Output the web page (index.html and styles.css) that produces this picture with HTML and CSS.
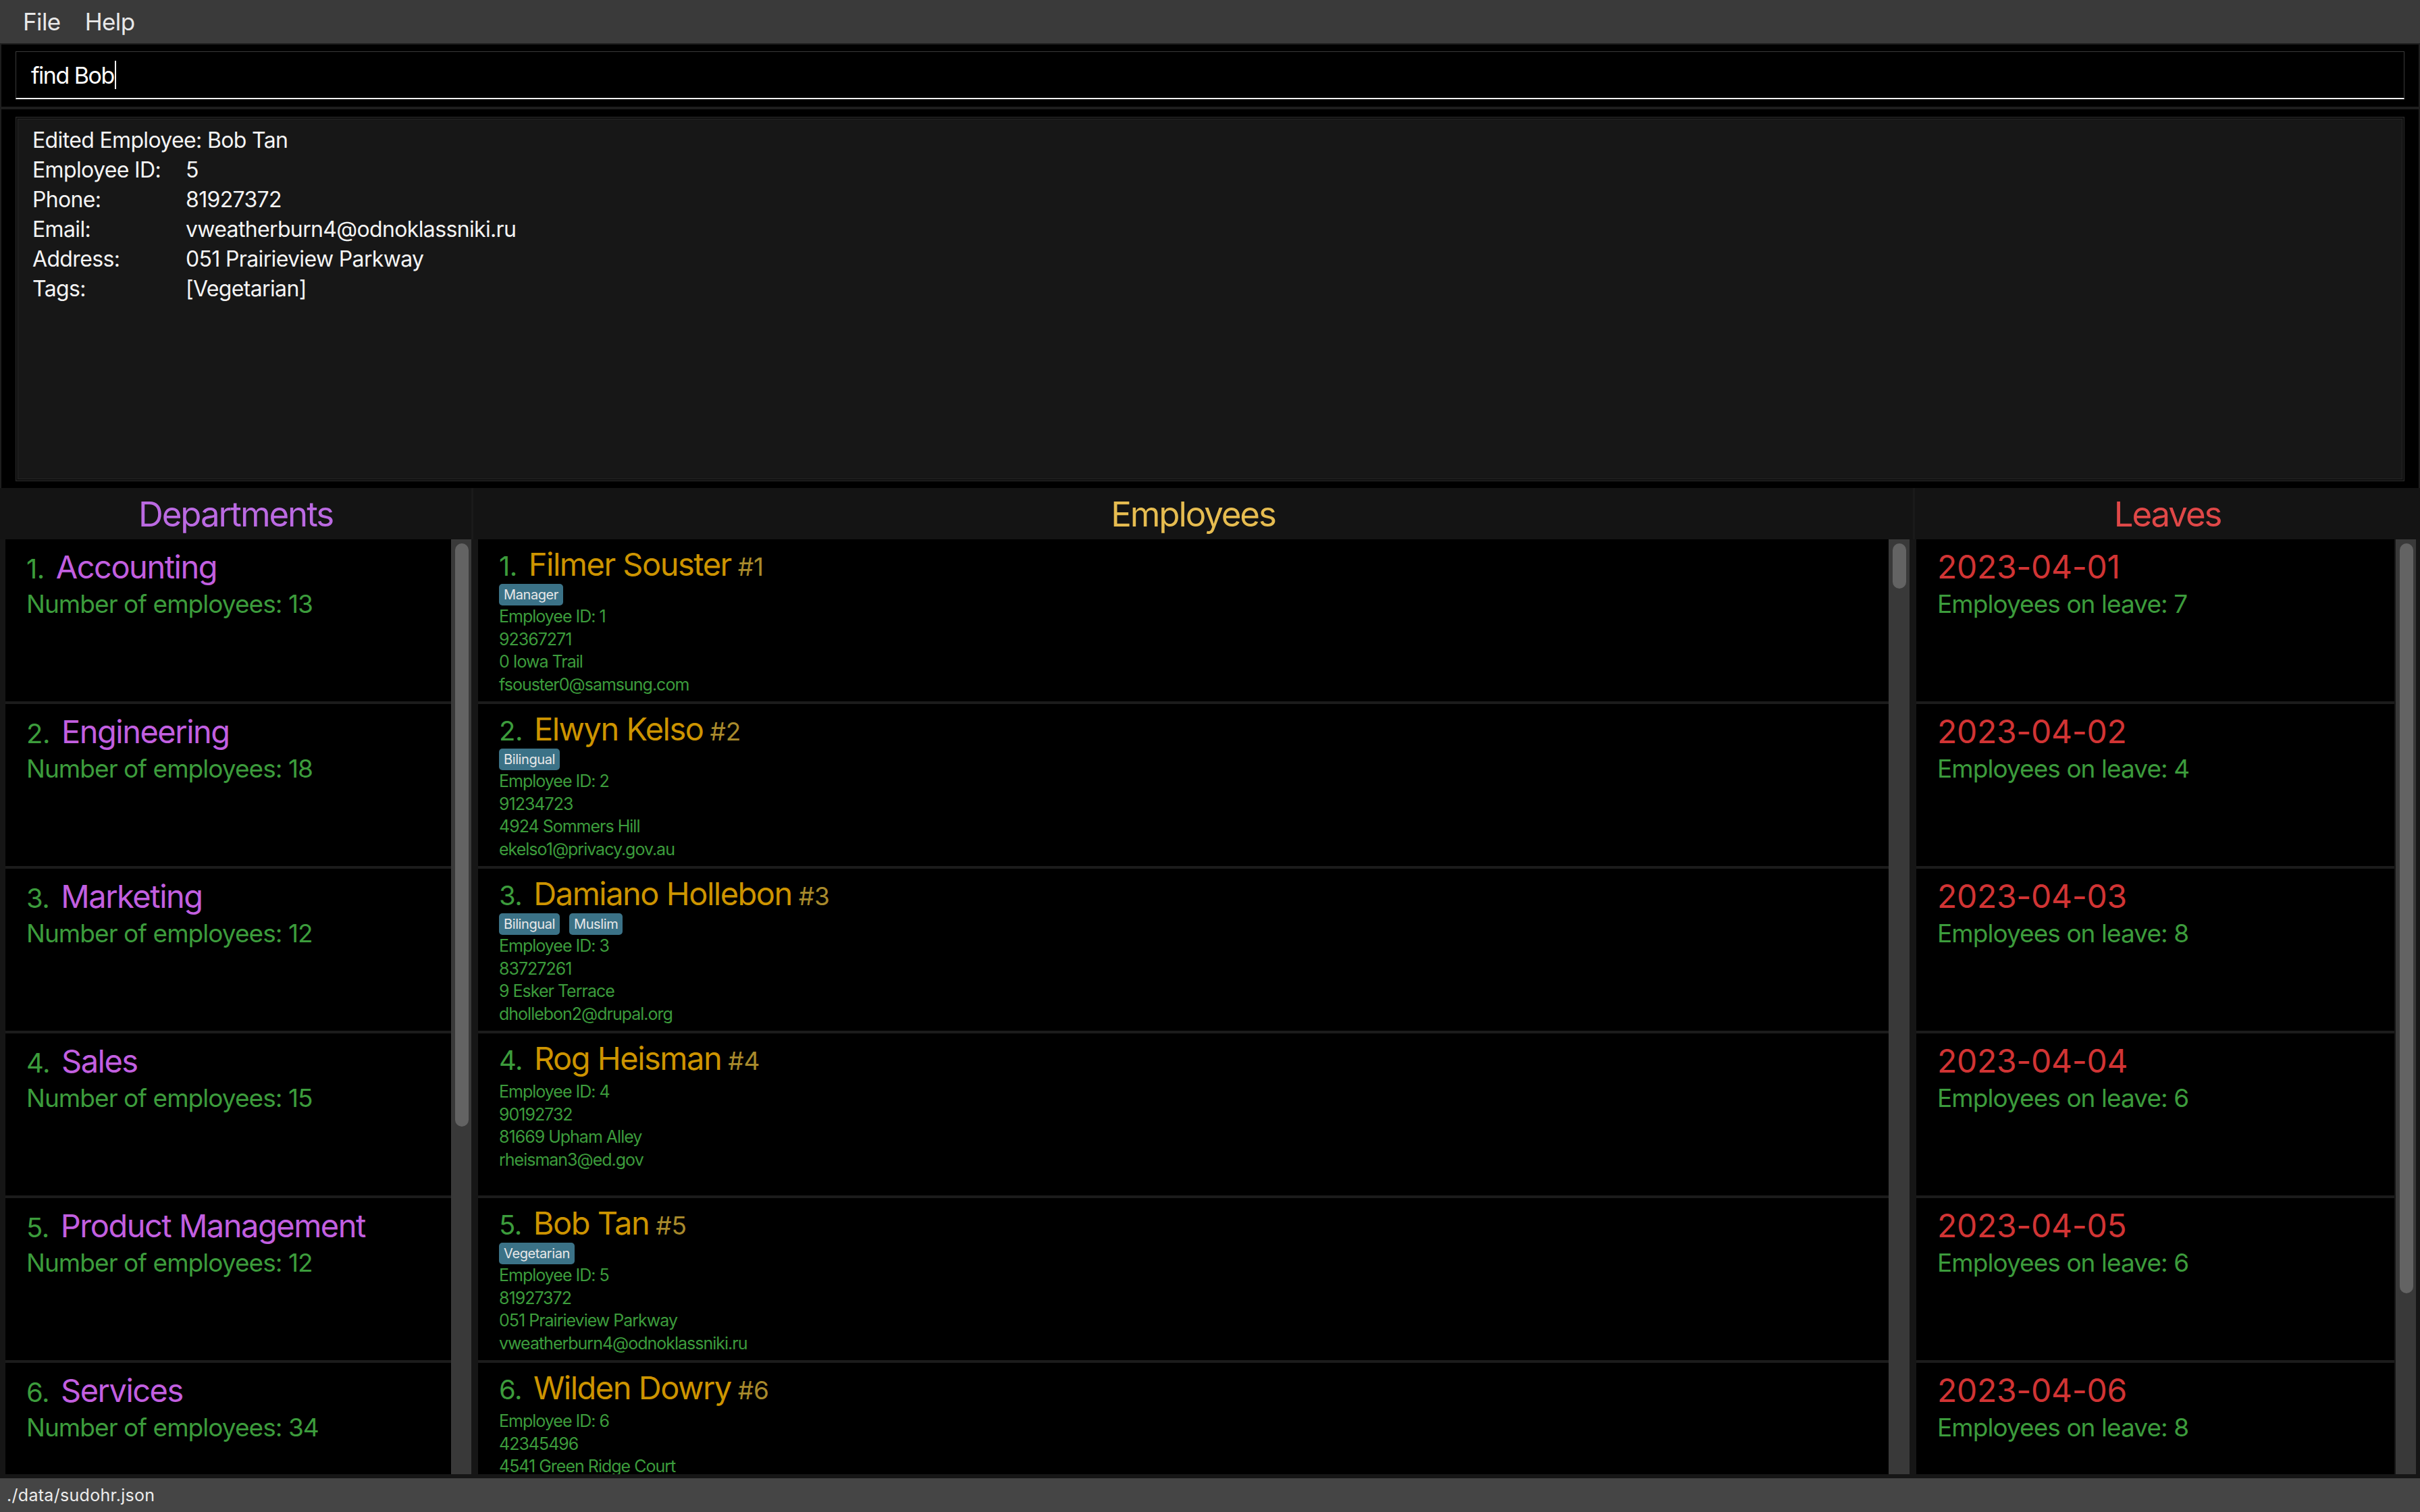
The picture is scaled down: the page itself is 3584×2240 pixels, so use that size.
FILE: index.html
```html
<!DOCTYPE html>
<html lang="en">
<head>
<meta charset="utf-8">
<title>SudoHR</title>
<link rel="stylesheet" href="styles.css">
</head>
<body>
<div class="app">
  <div class="menubar">
    <span class="menu-item">File</span>
    <span class="menu-item">Help</span>
  </div>

  <div class="command-pane">
    <div class="command-input"><span class="command-text">find Bob</span><span class="caret"></span></div>
  </div>

  <div class="result-pane">
    <div class="result-box">
      <div class="result-line">Edited Employee: Bob Tan</div>
      <div class="result-grid">
        <span>Employee ID:</span><span>5</span>
        <span>Phone:</span><span>81927372</span>
        <span>Email:</span><span>vweatherburn4@odnoklassniki.ru</span>
        <span>Address:</span><span>051 Prairieview Parkway</span>
        <span>Tags:</span><span>[Vegetarian]</span>
      </div>
    </div>
  </div>

  <div class="columns">
    <section class="column col-dept">
      <div class="col-header dept-header">Departments</div>
      <div class="list-wrap">
        <div class="list">
          <div class="cell"><div class="title-row"><span class="idx">1.</span><span class="dept-name">Accounting</span></div><div class="sub">Number of employees: 13</div></div>
          <div class="cell"><div class="title-row"><span class="idx">2.</span><span class="dept-name">Engineering</span></div><div class="sub">Number of employees: 18</div></div>
          <div class="cell"><div class="title-row"><span class="idx">3.</span><span class="dept-name">Marketing</span></div><div class="sub">Number of employees: 12</div></div>
          <div class="cell"><div class="title-row"><span class="idx">4.</span><span class="dept-name">Sales</span></div><div class="sub">Number of employees: 15</div></div>
          <div class="cell"><div class="title-row"><span class="idx">5.</span><span class="dept-name">Product Management</span></div><div class="sub">Number of employees: 12</div></div>
          <div class="cell"><div class="title-row"><span class="idx">6.</span><span class="dept-name">Services</span></div><div class="sub">Number of employees: 34</div></div>
        </div>
        <div class="scrollbar"><div class="thumb thumb-dept"></div></div>
      </div>
    </section>

    <section class="column col-emp">
      <div class="col-header emp-header">Employees</div>
      <div class="list-wrap">
        <div class="list">
          <div class="cell emp-cell">
            <div class="title-row"><span class="idx">1.</span><span class="emp-name">Filmer Souster</span><span class="emp-id">#1</span></div>
            <div class="tags"><span class="tag">Manager</span></div>
            <div class="details"><div>Employee ID: 1</div><div>92367271</div><div>0 Iowa Trail</div><div>fsouster0@samsung.com</div></div>
          </div>
          <div class="cell emp-cell">
            <div class="title-row"><span class="idx">2.</span><span class="emp-name">Elwyn Kelso</span><span class="emp-id">#2</span></div>
            <div class="tags"><span class="tag">Bilingual</span></div>
            <div class="details"><div>Employee ID: 2</div><div>91234723</div><div>4924 Sommers Hill</div><div>ekelso1@privacy.gov.au</div></div>
          </div>
          <div class="cell emp-cell">
            <div class="title-row"><span class="idx">3.</span><span class="emp-name">Damiano Hollebon</span><span class="emp-id">#3</span></div>
            <div class="tags"><span class="tag">Bilingual</span><span class="tag">Muslim</span></div>
            <div class="details"><div>Employee ID: 3</div><div>83727261</div><div>9 Esker Terrace</div><div>dhollebon2@drupal.org</div></div>
          </div>
          <div class="cell emp-cell">
            <div class="title-row"><span class="idx">4.</span><span class="emp-name">Rog Heisman</span><span class="emp-id">#4</span></div>
            <div class="tags"></div>
            <div class="details"><div>Employee ID: 4</div><div>90192732</div><div>81669 Upham Alley</div><div>rheisman3@ed.gov</div></div>
          </div>
          <div class="cell emp-cell">
            <div class="title-row"><span class="idx">5.</span><span class="emp-name">Bob Tan</span><span class="emp-id">#5</span></div>
            <div class="tags"><span class="tag">Vegetarian</span></div>
            <div class="details"><div>Employee ID: 5</div><div>81927372</div><div>051 Prairieview Parkway</div><div>vweatherburn4@odnoklassniki.ru</div></div>
          </div>
          <div class="cell emp-cell">
            <div class="title-row"><span class="idx">6.</span><span class="emp-name">Wilden Dowry</span><span class="emp-id">#6</span></div>
            <div class="tags"></div>
            <div class="details"><div>Employee ID: 6</div><div>42345496</div><div>4541 Green Ridge Court</div></div>
          </div>
        </div>
        <div class="scrollbar"><div class="thumb thumb-emp"></div></div>
      </div>
    </section>

    <section class="column col-leave">
      <div class="col-header leave-header">Leaves</div>
      <div class="list-wrap">
        <div class="list">
          <div class="cell leave-cell"><div class="title-row"><span class="leave-date">2023-04-01</span></div><div class="sub">Employees on leave: 7</div></div>
          <div class="cell leave-cell"><div class="title-row"><span class="leave-date">2023-04-02</span></div><div class="sub">Employees on leave: 4</div></div>
          <div class="cell leave-cell"><div class="title-row"><span class="leave-date">2023-04-03</span></div><div class="sub">Employees on leave: 8</div></div>
          <div class="cell leave-cell"><div class="title-row"><span class="leave-date">2023-04-04</span></div><div class="sub">Employees on leave: 6</div></div>
          <div class="cell leave-cell"><div class="title-row"><span class="leave-date">2023-04-05</span></div><div class="sub">Employees on leave: 6</div></div>
          <div class="cell leave-cell"><div class="title-row"><span class="leave-date">2023-04-06</span></div><div class="sub">Employees on leave: 8</div></div>
        </div>
        <div class="scrollbar"><div class="thumb thumb-leave"></div></div>
      </div>
    </section>
  </div>

  <div class="statusbar">./data/sudohr.json</div>
</div>
</body>
</html>
```

FILE: styles.css
```css
* {
  box-sizing: border-box;
  margin: 0;
  padding: 0;
}

html, body {
  width: 3584px;
  height: 2240px;
  overflow: hidden;
  background: #000;
}

body {
  font-family: Inter, "Noto Sans", sans-serif;
  color: #fff;
}

.app {
  display: flex;
  flex-direction: column;
  height: 2240px;
}

/* Menu bar */
.menubar {
  flex: none;
  height: 64px;
  background: #3a3a3a;
  display: flex;
  align-items: center;
  padding-left: 16px;
  font-size: 35px;
  letter-spacing: -0.6px;
  color: #e8e8e8;
}

.menu-item {
  padding: 0 18px;
}

/* Command box */
.command-pane {
  flex: none;
  height: 96px;
  border: 2px solid #1e1e1e;
  padding: 10px 21px 11px;
  background: #000;
}

.command-input {
  height: 71px;
  border: 1px solid #3a3a3a;
  border-bottom: 2px solid #f2f2f2;
  background: #000;
  display: flex;
  align-items: center;
  padding-left: 22px;
  font-size: 34px;
  letter-spacing: -1.5px;
  color: #fff;
}

.caret {
  display: inline-block;
  width: 2px;
  height: 42px;
  background: #fff;
  margin-left: 1px;
}

/* Result display */
.result-pane {
  flex: none;
  height: 563px;
  border: 2px solid #1e1e1e;
  border-bottom: none;
  padding: 11px 21px 10px;
  background: #000;
}

.result-box {
  height: 540px;
  border: 1px solid #2c2c2c;
  box-shadow: inset 0 0 0 2px #0e0e0e, inset 0 0 0 3px #262626;
  background: #171717;
  padding: 12px 24px;
  font-size: 32px;
  line-height: 44px;
  letter-spacing: -0.65px;
  color: #f4f4f4;
}

.result-grid {
  display: grid;
  grid-template-columns: 227px auto;
}

/* Columns */
.columns {
  flex: 1;
  display: grid;
  grid-template-columns: 698px 2135px 751px;
  background: #161616;
  padding-bottom: 6px;
  min-height: 0;
}

.column {
  display: flex;
  flex-direction: column;
  min-height: 0;
}

.col-dept { padding-left: 8px; }
.col-emp { padding-left: 10px; padding-right: 5px; }
.col-leave { padding-left: 5px; padding-right: 6px; }

.col-header {
  flex: none;
  height: 76px;
  display: flex;
  align-items: center;
  justify-content: center;
  font-size: 51px;
  letter-spacing: -2.1px;
  background: #141414;
}

.col-dept .col-header { margin-left: -8px; }
.col-emp .col-header { margin-left: -10px; margin-right: -5px; border-left: 3px solid #1a1a1a; }
.col-leave .col-header { margin-left: -5px; margin-right: -6px; border-left: 3px solid #1a1a1a; }

.dept-header { color: #bb6ae2; }
.emp-header { color: #e6bc50; }
.leave-header { color: #e04848; }

.list-wrap {
  flex: 1;
  display: flex;
  min-height: 0;
}

.list {
  flex: 1;
  min-width: 0;
  display: flex;
  flex-direction: column;
  gap: 4px;
  background: #1c1c1c;
  overflow: hidden;
}

.col-leave .list { margin-right: 2px; }

.scrollbar {
  flex: none;
  width: 30px;
  background: #393939;
  padding: 6px 0 0 6px;
}

.col-emp .scrollbar { width: 31px; }

.thumb {
  width: 20px;
  background: #636363;
  border-radius: 10px;
}

.thumb-dept { height: 864px; }
.thumb-emp { height: 67px; }
.thumb-leave { height: 1111px; }

/* Cells */
.cell {
  flex: none;
  height: 240px;
  background: #000;
  padding: 12px 0 0 31px;
  overflow: hidden;
}

.title-row {
  display: flex;
  align-items: baseline;
  height: 58px;
  line-height: 58px;
  white-space: nowrap;
}

.idx {
  font-size: 40px;
  letter-spacing: -0.5px;
  color: #3c9c3c;
  margin-right: 17px;
}

.dept-name {
  font-size: 47px;
  letter-spacing: -1.5px;
  color: #c25fe0;
}

.sub {
  margin-top: 4px;
  font-size: 37px;
  line-height: 44px;
  letter-spacing: -0.95px;
  color: #3c9c3c;
  white-space: nowrap;
}

.emp-cell {
  padding-top: 8px;
}

.emp-name {
  font-size: 47px;
  letter-spacing: -1.5px;
  color: #cd9400;
}

.emp-id {
  font-size: 37px;
  letter-spacing: -0.2px;
  color: #a88a2c;
  margin-left: 10px;
}

.tags {
  display: flex;
  gap: 14px;
  min-height: 4px;
}

.tag {
  height: 32px;
  line-height: 32px;
  padding: 0 7px;
  border-radius: 5px;
  background: #3b7287;
  color: #e8e8e8;
  font-size: 20px;
  letter-spacing: -0.4px;
}

.details {
  font-size: 25px;
  line-height: 33.5px;
  letter-spacing: -1px;
  color: #3c9c3c;
  white-space: nowrap;
}

.leave-cell {
  padding-left: 31px;
}

.leave-date {
  font-size: 48px;
  letter-spacing: -0.3px;
  color: #d13434;
}

/* Status bar */
.statusbar {
  flex: none;
  height: 50px;
  background: #454545;
  display: flex;
  align-items: center;
  padding-left: 10px;
  font-size: 25px;
  letter-spacing: 0.3px;
  color: #ececec;
}
```
